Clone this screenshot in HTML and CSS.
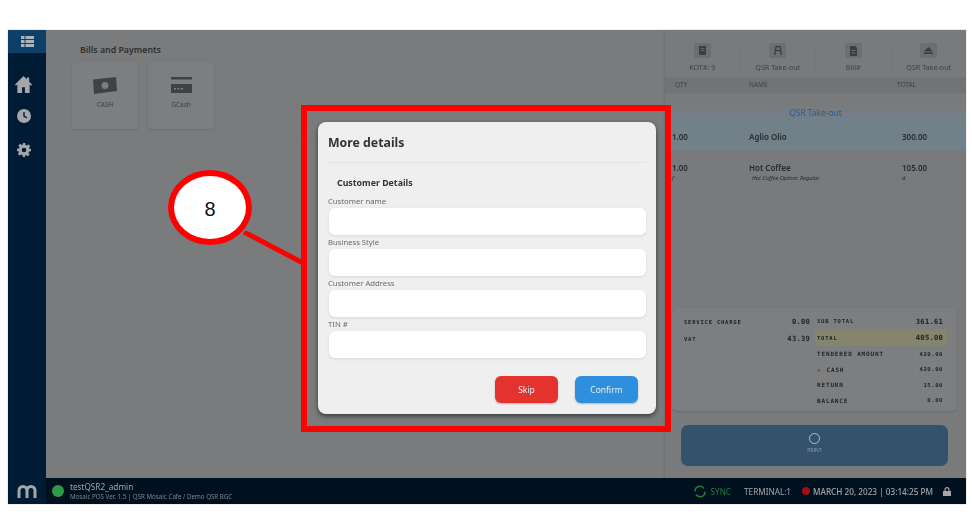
FILE: index.html
```html
<!DOCTYPE html>
<html lang="en">
<head>
<meta charset="utf-8">
<title>More details</title>
<link rel="stylesheet" href="styles.css">
</head>
<body>
<div class="app">
  <aside class="sidebar">
    <div class="side-head">
      <svg width="13" height="11" viewBox="0 0 13 11"><path fill="#a9b4be" d="M0 0h3.500v3H0zM4.500 0H13v3H4.500zM0 4h3.500v3H0zM4.500 4H13v3H4.500zM0 8h3.500v3H0zM4.500 8H13v3H4.500z"/></svg>
    </div>
    <nav class="side-nav">
      <svg width="17" height="17" viewBox="0 0 18 18"><path fill="#a3a7aa" d="M9 0 0 9l1 1.200 1.500-1.200v9h5v-6h3v6h5V9l1.500 1.200L18 9l-3-3V1.500h-2.500V3.500z"/></svg>
      <svg width="14" height="14" viewBox="0 0 15 15"><circle cx="7.500" cy="7.500" r="7.500" fill="#a3a7aa"/><path d="M7.500 3.200v4.500l3 1.800" fill="none" stroke="#001c35" stroke-width="1.500"/></svg>
      <svg class="gear" width="14" height="14" viewBox="0 0 24 24"><path fill="#a3a7aa" fill-rule="evenodd" d="M10 0h4l.6 3.300 2.300 1 2.800-1.900 2.900 2.900-1.900 2.800 1 2.300L24 10v4l-3.300.6-1 2.300 1.900 2.800-2.900 2.900-2.800-1.900-2.300 1L14 24h-4l-.6-3.300-2.300-1-2.800 1.900-2.900-2.900 1.900-2.800-1-2.300L0 14v-4l3.300-.6 1-2.300-1.900-2.800 2.900-2.900 2.800 1.900 2.300-1zM12 8a4 4 0 1 0 0 8 4 4 0 0 0 0-8z"/></svg>
    </nav>
    <div class="side-logo">
      <svg width="20" height="14" viewBox="0 0 20 14"><path d="M2 14V6.500a4 4 0 0 1 8 0V14M10 6.500a4 4 0 0 1 8 0V14" fill="none" stroke="#a3a7aa" stroke-width="3"/></svg>
    </div>
  </aside>

  <div class="content">
    <div class="panels">
      <main class="payments">
        <h2 class="pay-title">Bills and Payments</h2>
        <div class="pay-cards">
          <div class="pay-card">
            <svg width="24" height="17" viewBox="0 0 24 17"><path fill="#3f4142" fill-rule="evenodd" d="M0 2.500 23 0l1 14-23 3zM12 5a3.500 3.500 0 1 0 0 7 3.500 3.500 0 0 0 0-7z"/><circle cx="12" cy="8.500" r="2" fill="#7d7e7f"/></svg>
            <span>CASH</span>
          </div>
          <div class="pay-card">
            <svg width="21" height="17" viewBox="0 0 21 17"><path fill="#3f4142" fill-rule="evenodd" d="M0 0h21v2.500H0zM0 7h21v9H0zM3 11v1.500h2V11zM6.500 11v1.500h2V11zM10 11v1.500h2V11z"/></svg>
            <span>GCash</span>
          </div>
        </div>
        <hr class="pay-rule">
      </main>

      <section class="order">
        <div class="tabs">
          <div class="tab"><span class="tab-icon"><svg width="7" height="9" viewBox="0 0 7 9"><path fill="#3b3d3e" fill-rule="evenodd" d="M0 0h7v9H0zM1.500 2v.8h4V2zM1.500 4v.8h4V4z"/></svg></span><span>KOT#: 9</span></div>
          <div class="tab"><span class="tab-icon"><svg width="8" height="9" viewBox="0 0 8 9"><path fill="none" stroke="#3b3d3e" stroke-width="1.300" d="M2 .7h4l.7 4H1.300zM1 9V5M7 9V5"/></svg></span><span>QSR Take-out</span></div>
          <div class="tab"><span class="tab-icon"><svg width="7" height="10" viewBox="0 0 7 10"><path fill="#3b3d3e" fill-rule="evenodd" d="M0 0h5l2 2v8H0zM1.500 4v1h4V4zM1.500 6.500v1h4v-1z"/></svg></span><span>Bill#</span></div>
          <div class="tab"><span class="tab-icon"><svg width="9" height="7" viewBox="0 0 9 7"><path fill="#3b3d3e" d="M4.500 0 9 4.500H0zM0 5.500h9V7H0z"/></svg></span><span>QSR Take-out</span></div>
        </div>
        <div class="order-head"><span>QTY</span><span>NAME</span><span>TOTAL</span></div>
        <div class="order-band">
          <div class="band-title">QSR Take-out</div>
          <div class="line line-main"><span>1.00</span><span>Aglio Olio</span><span>300.00</span></div>
        </div>
        <div class="line line-second"><span>1.00</span><span>Hot Coffee</span><span>105.00</span></div>
        <div class="line line-sub"><span>f</span><span>Hot Coffee Option: Regular</span><span>d</span></div>

        <div class="summary">
          <div class="sum-left">
            <div class="sum-row sum-tall"><span>SERVICE CHARGE</span><b>0.00</b></div>
            <div class="sum-row sum-tall"><span>VAT</span><b>43.39</b></div>
          </div>
          <div class="sum-right">
            <div class="sum-row"><span>SUB TOTAL</span><b>361.61</b></div>
            <div class="sum-row sum-total"><span>TOTAL</span><b>405.00</b></div>
            <div class="sum-row sum-small"><span>TENDERED AMOUNT</span><em>420.00</em></div>
            <div class="sum-row sum-small"><span><i class="cross">✕</i>CASH</span><em>420.00</em></div>
            <div class="sum-row sum-small"><span>RETURN</span><em>15.00</em></div>
            <div class="sum-row sum-small"><span>BALANCE</span><em>0.00</em></div>
          </div>
        </div>
        <div class="print"><span class="ring"></span><span>PRINT</span></div>
      </section>
    </div>

    <footer class="status">
      <span class="online"></span>
      <div class="user">
        <div class="user-name">testQSR2_admin</div>
        <div class="user-info">Mosaic POS Ver. 1.5 | QSR Mosaic Cafe / Demo QSR BGC</div>
      </div>
      <div class="status-right">
        <svg width="12" height="13" viewBox="0 0 12 13"><path fill="none" stroke="#1f7f3c" stroke-width="1.500" d="M2 3a5 5 0 0 1 8 .5M10 10a5 5 0 0 1-8-.500M1 6.500a5 5 0 0 1 1-3.500M11 6.500a5 5 0 0 1-1 3.500"/></svg>
        <span class="sync">SYNC</span>
        <span class="terminal">TERMINAL:1</span>
        <span class="rec"></span>
        <span class="date">MARCH 20, 2023 | 03:14:25 PM</span>
        <svg class="lock" width="8" height="9" viewBox="0 0 8 9"><path fill="#a3a7aa" d="M0 4h8v5H0zM1.500 4V2.500a2.500 2.500 0 0 1 5 0V4H5.300V2.500a1.300 1.300 0 0 0-2.600 0V4z"/></svg>
      </div>
    </footer>
  </div>
</div>

<section class="modal">
  <h1 class="modal-title">More details</h1>
  <h3 class="modal-sub">Customer Details</h3>
  <div class="fields">
    <label class="field">Customer name<span class="input"></span></label>
    <label class="field">Business Style<span class="input"></span></label>
    <label class="field">Customer Address<span class="input"></span></label>
    <label class="field">TIN #<span class="input"></span></label>
  </div>
  <div class="actions">
    <span class="btn btn-skip">Skip</span>
    <span class="btn btn-confirm">Confirm</span>
  </div>
</section>

<div class="frame"></div>
<svg class="connector" width="62" height="34" viewBox="0 0 62 34"><path d="M1 1 60 32" stroke="#f00" stroke-width="5" fill="none"/></svg>
<div class="callout">8</div>
</body>
</html>
```

FILE: styles.css
```css
* { box-sizing: border-box; }
html, body { margin: 0; height: 100%; }
body {
  position: relative;
  background: #fff;
  width: 972px;
  height: 524px;
  overflow: hidden;
  padding: 30px 6px 20px 8px;
  font-family: "Noto Sans", "Open Sans", sans-serif;
}
.app {
  display: flex;
  height: 474px;
  filter: blur(0.35px);
  box-shadow: 0 0 1px #999;
}
.sidebar {
  width: 38px;
  background: #001c35;
  display: flex;
  flex-direction: column;
}
.side-head {
  height: 23px;
  background: #0e3f68;
  display: flex;
  align-items: center;
  justify-content: center;
}
.side-nav {
  flex: 1;
  display: flex;
  flex-direction: column;
  align-items: center;
  gap: 16px;
  padding: 23px 7px 0 0;
}
.gear { margin-top: 4px; }
.side-logo {
  height: 26px;
  display: flex;
  align-items: center;
  justify-content: center;
}
.content { flex: 1; display: flex; flex-direction: column; min-width: 0; }
.panels { flex: 1; display: flex; min-height: 0; }
.payments {
  flex: 1;
  background: #7a7b7c;
  padding: 14px 6px 0 26px;
}
.pay-title {
  margin: 0 0 6px 8px;
  font-size: 8.800px;
  line-height: 12px;
  font-weight: 600;
  color: #2e3031;
}
.pay-cards { display: flex; gap: 10px; }
.pay-card {
  width: 66px;
  height: 67px;
  background: #7d7e7f;
  border-radius: 4px;
  box-shadow: 0 1px 2px rgba(0,0,0,.12);
  display: flex;
  flex-direction: column;
  align-items: center;
  padding-top: 15px;
  gap: 6px;
  font-size: 6.500px;
  line-height: 9px;
  color: #3d3f40;
}
.pay-rule { border: 0; border-top: 1px solid #767778; margin: 8px 0 0; }
.order {
  width: 301px;
  background: #797a7b;
  display: flex;
  flex-direction: column;
  box-shadow: -1px 0 2px rgba(0,0,0,.1);
}
.tabs { height: 47px; display: flex; padding-top: 13px; }
.tab {
  flex: 1;
  display: flex;
  flex-direction: column;
  align-items: center;
  gap: 5px;
  font-size: 7.200px;
  line-height: 9px;
  color: #3f4142;
  border-right: 1px solid #757677;
  margin-bottom: 5px;
}
.tab:last-child { border-right: 0; }
.tab-icon {
  width: 17px;
  height: 15px;
  background: #6d6e6f;
  border-radius: 2px;
  display: flex;
  align-items: center;
  justify-content: center;
}
.order-head {
  height: 16px;
  background: #727374;
  display: grid;
  grid-template-columns: 74px 148px 1fr;
  padding-left: 10px;
  font-size: 6.500px;
  line-height: 16px;
  color: #3f4142;
}
.order-band {
  margin-top: 10px;
  height: 47px;
  background: linear-gradient(#7a7b7c, #72808a 35%, #72808a);
}
.band-title {
  text-align: center;
  font-size: 8.400px;
  line-height: 20px;
  color: #285c94;
}
.line {
  display: grid;
  grid-template-columns: 77px 153px 1fr;
  padding-left: 7px;
  color: #282a2b;
}
.line-main { margin-top: 7px; font-size: 8px; line-height: 14px; font-weight: 600; }
.line-second { margin-top: 11px; font-size: 8px; line-height: 14px; font-weight: 600; }
.line-sub { font-size: 5.700px; line-height: 7px; font-style: italic; }
.line-sub span:nth-child(2) { padding-left: 3px; }
.summary {
  margin: 126px 0 0 7px;
  width: 285px;
  height: 103px;
  background: #7d7e7f;
  border-radius: 6px;
  box-shadow: 0 1px 2px rgba(0,0,0,.12);
  display: grid;
  grid-template-columns: 126px 1fr;
  gap: 7px;
  padding: 5px 14px 0 12px;
  color: #1f2122;
}
.sum-row {
  display: flex;
  justify-content: space-between;
  align-items: center;
  height: 16px;
  font-size: 5.500px;
  font-weight: 700;
  letter-spacing: .8px;
  font-family: "DejaVu Sans Mono", "Noto Sans", monospace;
}
.sum-row b { font-size: 7.200px; font-weight: 700; letter-spacing: .2px; }
.sum-row em { font-style: normal; font-size: 5.500px; letter-spacing: .6px; }
.sum-tall { height: 17px; }
.sum-small { height: 15.500px; font-size: 6px; letter-spacing: .85px; }
.sum-total {
  background: #85846d;
  margin: 0 -4px 0 -2px;
  padding: 0 4px 0 2px;
  height: 17px;
}
.cross { color: #a01818; font-style: normal; margin-right: 5px; }
.print {
  margin: 14px 18px 0 16px;
  height: 41px;
  background: #34526c;
  border-radius: 7px;
  display: flex;
  flex-direction: column;
  align-items: center;
  padding-top: 8px;
  gap: 3px;
  font-size: 5px;
  line-height: 7px;
  color: #8c99a4;
}
.ring {
  width: 11px;
  height: 11px;
  border: 1.500px solid #b6bec5;
  border-radius: 50%;
}
.status {
  height: 26px;
  background: #00101f;
  display: flex;
  align-items: center;
  padding: 0 15px 0 6px;
  color: #a3a7aa;
}
.online { width: 12px; height: 12px; border-radius: 50%; background: #2f9a43; margin-right: 6px; }
.user-name { font-size: 8.200px; line-height: 11.500px; }
.user-info { font-size: 6.200px; line-height: 8.500px; color: #7f8488; }
.status-right { margin-left: auto; display: flex; align-items: center; font-size: 8.200px; }
.sync { color: #1f7f3c; margin: 0 13px 0 5px; }
.terminal { margin-right: 11px; }
.rec { width: 8px; height: 8px; border-radius: 50%; background: #a00f14; margin-right: 3px; }
.date { font-weight: 500; }
.lock { margin-left: 10px; }

/* Dialog and annotation overlays */
.modal {
  position: absolute;
  left: 318px;
  top: 122px;
  width: 338px;
  height: 292px;
  background: #efefef;
  border-radius: 8px;
  box-shadow: 0 2px 5px rgba(0,0,0,.55);
  padding: 0 10px;
  filter: blur(0.3px);
  color: #333;
}
.modal-title {
  margin: 0;
  height: 41px;
  border-bottom: 1px solid #e4e4e4;
  font-size: 12.300px;
  line-height: 41px;
  font-weight: 700;
}
.modal-sub {
  margin: 13px 0 0 9px;
  font-size: 8.800px;
  line-height: 14px;
  font-weight: 700;
}
.fields { margin-top: 5px; display: flex; flex-direction: column; gap: 1px; }
.field {
  display: block;
  font-size: 7.700px;
  line-height: 12px;
  height: 40px;
  color: #6a6a6a;
}
.input {
  display: block;
  margin: 1px 0 0 1px;
  height: 27px;
  background: #fff;
  border-radius: 6px;
  box-shadow: 0 1px 3px rgba(0,0,0,.1);
}
.actions {
  margin-top: 18px;
  padding-right: 8px;
  display: flex;
  justify-content: flex-end;
  gap: 17px;
}
.btn {
  width: 63px;
  height: 27px;
  border-radius: 6px;
  display: flex;
  align-items: center;
  justify-content: center;
  font-size: 8.500px;
  color: #e9eef3;
  box-shadow: 0 1px 2px rgba(0,0,0,.25);
}
.btn-skip { background: #e4332e; }
.btn-confirm { background: #2f8fdf; }
.frame {
  position: absolute;
  left: 301px;
  top: 105px;
  width: 370px;
  height: 327px;
  border: 6px solid #f00;
}
.connector { position: absolute; left: 243px; top: 231px; }
.callout {
  position: absolute;
  left: 168px;
  top: 170px;
  width: 84px;
  height: 75px;
  background: #fff;
  border: 6px solid #f00;
  border-radius: 50%;
  text-align: center;
  font: 20px/66px "Liberation Sans", sans-serif;
  color: #111;
}
```
